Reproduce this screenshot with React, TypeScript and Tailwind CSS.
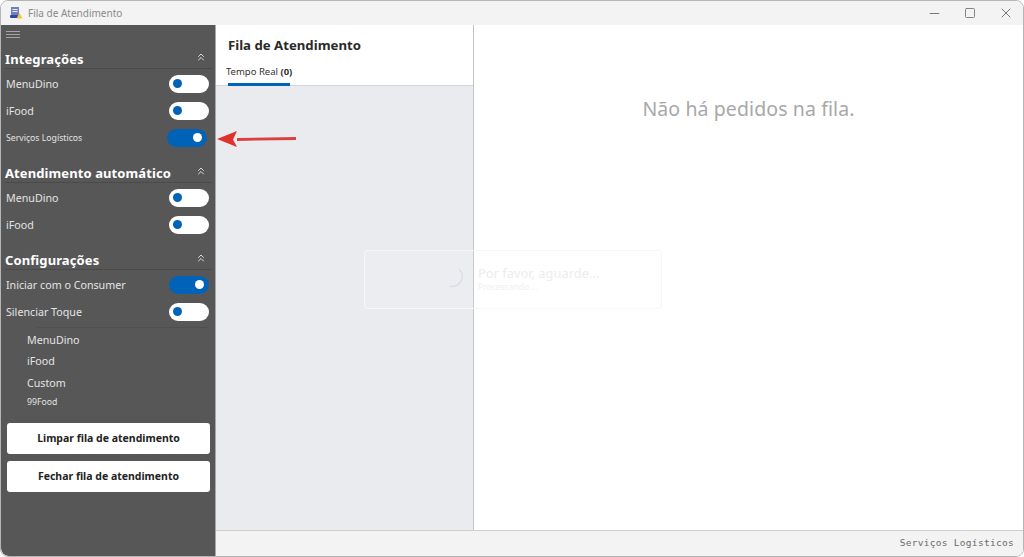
import React from 'react';
import { ChevronsUp, Minus, Square, X } from 'lucide-react';

const UI_FONT = "font-['Noto_Sans','Open_Sans',sans-serif]";

function Toggle({ on, className = '' }: { on?: boolean; className?: string }) {
  return (
    <div
      className={`w-10 h-[18px] -mt-[2px] rounded-full flex items-center shrink-0 ${
        on ? 'bg-[#0063b8] justify-end pr-[5px]' : 'bg-white justify-start pl-[4px]'
      } ${className}`}
    >
      <div className={`rounded-full ${on ? 'w-[9px] h-[9px] bg-white' : 'w-[9px] h-[9px] bg-[#0063b8]'}`} />
    </div>
  );
}

function SectionHeader({ title, className = '' }: { title: string; className?: string }) {
  return (
    <div className={`ml-[4px] mr-[3px] h-[20px] border-b border-[#4a4a4a] flex items-center justify-between ${className}`}>
      <span className="text-[13px] leading-[20px] font-bold text-white tracking-[0.1px]">{title}</span>
      <ChevronsUp className="w-[12px] h-[12px] text-[#e8e8e8] mr-[5px] mb-[4px]" strokeWidth={1.8} />
    </div>
  );
}

function Row({ label, on, small, shift }: { label: string; on?: boolean; small?: boolean; shift?: boolean }) {
  return (
    <div className="h-[27px] pl-[5px] pr-[6px] flex items-center justify-between">
      <span className={small ? 'text-[8.7px] text-[#e4e4e4] mt-[1px]' : 'text-[10.7px] text-[#e4e4e4]'}>{label}</span>
      <Toggle on={on} className={shift ? 'mr-[2px]' : ''} />
    </div>
  );
}

export default function App() {
  return (
    <div className={`relative w-[1024px] h-[557px] overflow-hidden flex flex-col bg-white border border-[#b5b5b5] rounded-lg ${UI_FONT}`}>
      {/* barra de titulo */}
      <div className="h-6 shrink-0 bg-[#f3f3f3] flex items-center">
        <svg className="ml-[8px] w-[14px] h-[14px]" viewBox="0 0 14 14">
          <rect x="2" y="1" width="8" height="9" fill="#6f82bd" />
          <rect x="3.5" y="3" width="5" height="1" fill="#e8ecf8" />
          <rect x="3.5" y="5" width="5" height="1" fill="#e8ecf8" />
          <rect x="1" y="9" width="8" height="3" rx="1" fill="#2c48a8" />
          <path d="M10.5 7l3 5.5h-6z" fill="#f4c63d" />
        </svg>
        <span className="ml-[5px] text-[10px] text-[#8a8a8a]">Fila de Atendimento</span>
        <div className="ml-auto flex items-center text-[#777]">
          <Minus className="w-[15px] h-[15px] mr-[22px]" strokeWidth={1.6} />
          <Square className="w-[12px] h-[12px] mr-[22px]" strokeWidth={1.8} />
          <X className="w-[16px] h-[16px] mr-[9px]" strokeWidth={1.5} />
        </div>
      </div>

      <div className="flex-1 flex min-h-0">
        {/* menu lateral */}
        <div className="w-[215px] shrink-0 bg-[#575757] border-r border-[#a8a8a8] flex flex-col rounded-bl-lg">
          <div className="h-[17px] pt-[6px] pl-[5px] flex flex-col gap-[2px]">
            <div className="w-[14px] h-px bg-[#a5a5a5]" />
            <div className="w-[14px] h-px bg-[#a5a5a5]" />
            <div className="w-[14px] h-px bg-[#a5a5a5]" />
          </div>
          <SectionHeader title="Integrações" className="mt-[7px]" />
          <div className="pt-[2px]">
            <Row label="MenuDino" />
            <Row label="iFood" />
            <Row label="Serviços Logísticos" on small shift />
          </div>
          <SectionHeader title="Atendimento automático" className="mt-[11px]" />
          <div className="pt-[2px]">
            <Row label="MenuDino" />
            <Row label="iFood" />
          </div>
          <SectionHeader title="Configurações" className="mt-[11px]" />
          <div className="pt-[2px]">
            <Row label="Iniciar com o Consumer" on />
            <Row label="Silenciar Toque" />
          </div>
          <div className="ml-[36px] mr-[6px] border-t border-[#4f4f4f] mt-px" />
          <div className="pl-[26px] text-[#e4e4e4] text-[10.7px]">
            <div className="h-[21px] mt-[2px] flex items-center">MenuDino</div>
            <div className="h-[21px] flex items-center">iFood</div>
            <div className="h-[22px] flex items-center">Custom</div>
            <div className="h-[17px] flex items-center text-[8.7px]">99Food</div>
          </div>
          <div className="mt-[12px] px-[6px] flex flex-col gap-[7px]">
            <button className="w-[203px] h-[31px] bg-white rounded-[3px] text-[10.5px] font-bold text-[#222]">Limpar fila de atendimento</button>
            <button className="w-[203px] h-[31px] bg-white rounded-[3px] text-[10.5px] font-bold text-[#222]">Fechar fila de atendimento</button>
          </div>
        </div>

        {/* coluna da fila */}
        <div className="flex-1 flex flex-col min-w-0">
          <div className="flex-1 flex min-h-0">
            <div className="w-[258px] shrink-0 flex flex-col border-r border-[#c4c4c4] bg-[#eaebef]">
              <div className="bg-white h-[61px] shrink-0 border-b border-[#d4d4d4] flex flex-col">
                <div className="pl-[12px] pt-[11px] text-[13.2px] leading-[18px] font-bold text-[#2a2a2a]">Fila de Atendimento</div>
                <div className="ml-[12px] mt-[11px] w-[62px] h-[21px] shrink-0 border-b-[3px] border-[#0063b8] text-[9.5px] leading-[14px] text-[#333] whitespace-nowrap">
                  <span className="-ml-[2px]">Tempo Real <b>(0)</b></span>
                </div>
              </div>
            </div>
            <div className="flex-1 bg-white flex justify-center">
              <span className="mt-[70px] text-[19.5px] leading-[28px] text-[#a8a8a8] h-fit tracking-[0.1px]">Não há pedidos na fila.</span>
            </div>
          </div>
          {/* barra de status */}
          <div className="h-[26px] shrink-0 bg-[#f3f3f3] border-t border-[#cfcfcf] flex items-center justify-end pr-[9px]">
            <span className="font-['DejaVu_Sans_Mono',monospace] text-[9.5px] text-[#6a6a6a] tracking-[0.3px]">Serviços Logísticos</span>
          </div>
        </div>
      </div>

      {/* aviso de carregamento, quase transparente */}
      <div className="absolute left-[363px] top-[249px] w-[298px] h-[59px] rounded-[3px] border border-[#f6f6f6] bg-white/10 flex items-center">
        <div className="ml-[82px] w-[23px] h-[23px]">
          <svg className="w-full h-full" viewBox="0 0 24 24" fill="none">
            <path d="M13 1.5A10.5 10.5 0 0 1 3.5 19" stroke="#d5dfea" strokeWidth="1.5" strokeLinecap="round" />
          </svg>
        </div>
        <div className="ml-[8px] -mt-[3px] flex flex-col">
          <span className="text-[12.9px] leading-[16px] text-[#ededed]">Por favor, aguarde...</span>
          <span className="text-[8.5px] leading-[11px] text-[#f0f0f0]">Processando ...</span>
        </div>
      </div>

      {/* seta de destaque */}
      <svg className="absolute left-[216px] top-[128px] w-[82px] h-[20px]" viewBox="0 0 82 20">
        <path d="M79 9.5 L20 10.5" stroke="#d9403f" strokeWidth="2.8" fill="none" />
        <path d="M0 10 L20 2 L16 10.5 L20 18 Z" fill="#e0312f" />
      </svg>
    </div>
  );
}
